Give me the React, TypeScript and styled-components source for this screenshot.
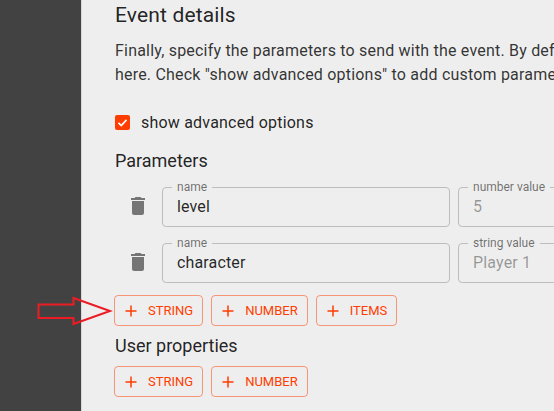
import React from "react";
import styled, { createGlobalStyle } from "styled-components";

const Global = createGlobalStyle`
  html, body { margin: 0; padding: 0; height: 100%; overflow: hidden; background: #eeeeee; }
  #root { height: 411px; overflow: hidden; }
`;

const Page = styled.div`
  position: relative;
  display: flex;
  width: 554px;
  height: 411px;
  overflow: hidden;
  background: #eeeeee;
  font-family: Roboto, "Liberation Sans", sans-serif;
  color: rgba(0, 0, 0, 0.87);
`;

const Sidebar = styled.aside`
  flex: 0 0 82px;
  background: #424242;
  border-right: 1px solid #d8d8d8;
  box-sizing: border-box;
`;

const Content = styled.main`
  flex: 0 0 auto;
  width: 800px;
  padding: 3px 0 0 33px;
  box-sizing: border-box;
`;

const Title = styled.h2`
  margin: 0;
  font-size: 21px;
  font-weight: 400;
  line-height: 24px;
  letter-spacing: 0.15px;
`;

const Paragraph = styled.p`
  margin: 12px 0 0;
  font-size: 16px;
  line-height: 24px;
  letter-spacing: 0.2px;
  width: 610px;
  color: rgba(0, 0, 0, 0.8);
`;

const CheckRow = styled.label`
  display: flex;
  align-items: center;
  gap: 11px;
  margin-top: 23px;
  height: 24px;
  font-size: 16px;
  letter-spacing: 0.2px;
`;

const CheckBox = styled.span`
  display: flex;
  align-items: center;
  justify-content: center;
  width: 15px;
  height: 15px;
  border-radius: 2px;
  background: #ff3d00;
`;

const SectionTitle = styled.h3<{ $top: number }>`
  margin: ${(p) => p.$top}px 0 0;
  font-size: 18px;
  font-weight: 400;
  line-height: 22px;
`;

const ParamRow = styled.div<{ $top: number }>`
  display: flex;
  align-items: flex-start;
  margin-top: ${(p) => p.$top}px;
`;

const TrashButton = styled.span`
  display: flex;
  justify-content: center;
  align-items: center;
  flex: 0 0 47px;
  height: 46px;
  padding: 4px 1px 0 0;
  box-sizing: border-box;
  color: #757575;
`;

const Field = styled.fieldset<{ $width: number }>`
  margin: 0 8px 0 0;
  padding: 0 14px;
  width: ${(p) => p.$width}px;
  height: 46px;
  box-sizing: border-box;
  flex: 0 0 auto;
  border: 1px solid #bdbdbd;
  border-radius: 4px;
`;

const Legend = styled.legend`
  padding: 0 5px;
  margin-left: -5px;
  font-size: 12px;
  line-height: 12px;
  height: 12px;
  color: rgba(0, 0, 0, 0.55);
`;

const Value = styled.div<{ $muted?: boolean }>`
  margin-top: 2px;
  font-size: 16px;
  line-height: 24px;
  letter-spacing: 0.15px;
  color: ${(p) => (p.$muted ? "rgba(0,0,0,0.38)" : "rgba(0,0,0,0.85)")};
`;

const ButtonRow = styled.div<{ $top: number }>`
  display: flex;
  gap: 8px;
  margin-top: ${(p) => p.$top}px;
  margin-left: -1px;
`;

const AddButton = styled.button`
  display: flex;
  align-items: center;
  gap: 10px;
  height: 31px;
  padding: 0 9px;
  box-sizing: border-box;
  background: transparent;
  border: 1px solid rgba(255, 61, 0, 0.5);
  border-radius: 4px;
  color: #ff3d00;
  font-family: inherit;
  font-size: 13px;
  text-transform: uppercase;
`;

const Arrow = styled.svg`
  position: absolute;
  left: 36px;
  top: 295px;
`;

const Plus = () => (
  <svg width="14" height="14" viewBox="0 0 14 14" aria-hidden="true">
    <path d="M7 1.5v11M1.5 7h11" stroke="#ff3d00" strokeWidth="1.5" fill="none" />
  </svg>
);

const Trash = () => (
  <svg width="24" height="24" viewBox="0 0 24 24" fill="currentColor" aria-hidden="true">
    <path d="M6 19c0 1.1.9 2 2 2h8c1.1 0 2-.9 2-2V7H6v12zM19 4h-3.5l-1-1h-5l-1 1H5v2h14V4z" />
  </svg>
);

const params = [
  { name: "level", label: "number value", value: "5", top: 9 },
  { name: "character", label: "string value", value: "Player 1", top: 10 },
];

export default function App() {
  return (
    <Page>
      <Global />
      <Sidebar />
      <Content>
        <Title>Event details</Title>
        <Paragraph>
          Finally, specify the parameters to send with the event. By default, they are listed
          here. Check "show advanced options" to add custom parameters.
        </Paragraph>
        <CheckRow>
          <CheckBox>
            <svg width="13" height="13" viewBox="0 0 13 13" aria-hidden="true">
              <path d="M2.5 6.8l2.8 2.7 5.2-5.6" stroke="#fff" strokeWidth="1.7" fill="none" />
            </svg>
          </CheckBox>
          show advanced options
        </CheckRow>
        <SectionTitle $top={16}>Parameters</SectionTitle>
        {params.map((p) => (
          <ParamRow key={p.name} $top={p.top}>
            <TrashButton>
              <Trash />
            </TrashButton>
            <Field $width={288}>
              <Legend>name</Legend>
              <Value>{p.name}</Value>
            </Field>
            <Field $width={200}>
              <Legend>{p.label}</Legend>
              <Value $muted>{p.value}</Value>
            </Field>
          </ParamRow>
        ))}
        <ButtonRow $top={12}>
          <AddButton><Plus />String</AddButton>
          <AddButton><Plus />Number</AddButton>
          <AddButton><Plus />Items</AddButton>
        </ButtonRow>
        <SectionTitle $top={9}>User properties</SectionTitle>
        <ButtonRow $top={9}>
          <AddButton><Plus />String</AddButton>
          <AddButton><Plus />Number</AddButton>
        </ButtonRow>
      </Content>
      <Arrow width="78" height="34" viewBox="0 0 78 34" aria-hidden="true">
        <path d="M2.5 9.5H37.5V3L74 16L37.5 29V23H2.5z" fill="none" stroke="#ed1c24" strokeWidth="2" />
      </Arrow>
    </Page>
  );
}
